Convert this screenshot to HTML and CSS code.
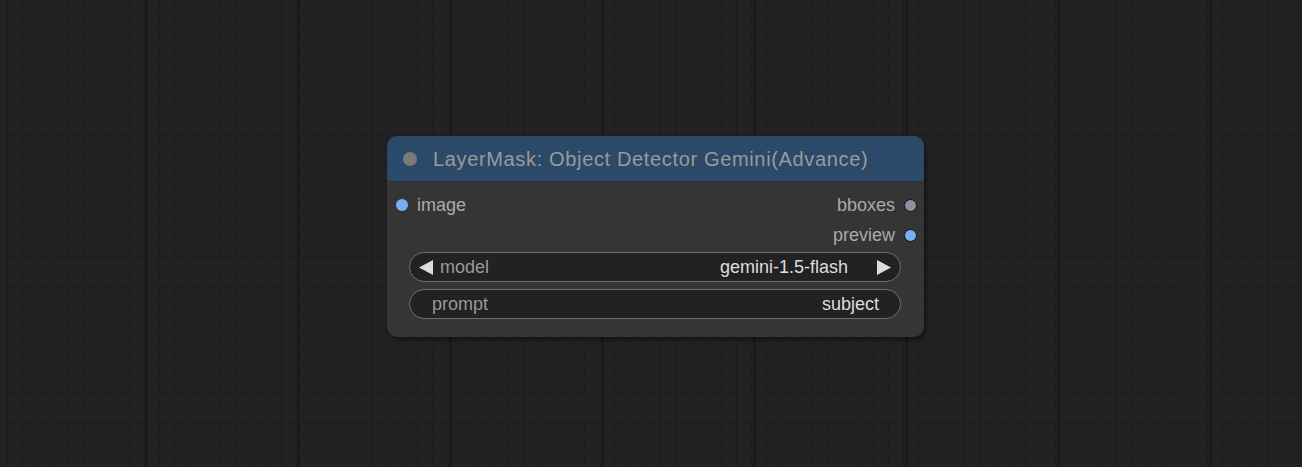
FILE: index.html
```html
<!DOCTYPE html>
<html>
<head>
<meta charset="utf-8">
<link rel="stylesheet" href="styles.css">
</head>
<body>
<div class="canvas">
  <div class="node">
    <div class="node-title">
      <span class="title-dot"></span>
      <span class="title-text">LayerMask: Object Detector Gemini(Advance)</span>
    </div>
    <div class="node-body">
      <div class="slots">
        <div class="slot-row">
          <div class="slot-in"><span class="dot dot-image"></span><span class="slot-label">image</span></div>
          <div class="slot-out"><span class="slot-label">bboxes</span><span class="dot dot-bbox"></span></div>
        </div>
        <div class="slot-row">
          <div class="slot-in"></div>
          <div class="slot-out"><span class="slot-label">preview</span><span class="dot dot-preview"></span></div>
        </div>
      </div>
      <div class="widgets">
        <div class="widget combo">
          <svg class="arrow" width="14" height="15" viewBox="0 0 14 15"><polygon points="14,0 14,15 0,7.5" fill="#dddddd"/></svg>
          <span class="w-label">model</span>
          <span class="w-value">gemini-1.5-flash</span>
          <svg class="arrow" width="14" height="15" viewBox="0 0 14 15"><polygon points="0,0 0,15 14,7.5" fill="#dddddd"/></svg>
        </div>
        <div class="widget text">
          <span class="w-label">prompt</span>
          <span class="w-value">subject</span>
        </div>
      </div>
    </div>
  </div>
</div>
</body>
</html>
```

FILE: styles.css
```css
html, body {
  margin: 0;
  padding: 0;
  width: 1302px;
  height: 467px;
  overflow: hidden;
}
body {
  font-family: "Liberation Sans", Arial, sans-serif;
  background-color: #222222;
}
.canvas {
  position: relative;
  width: 1302px;
  height: 467px;
  background-color: #222222;
  background-image:
    linear-gradient(to right, #1a1a1a 0, #1a1a1a 3px, transparent 3px),
    linear-gradient(to right, #1c1c1c 0, #1c1c1c 1px, transparent 1px),
    linear-gradient(to bottom, #1c1c1c 0, #1c1c1c 1px, transparent 1px);
  background-size: 152px 100%, 15.2px 100%, 100% 15.2px;
  background-position: 145px 0, 7px 0, 0 13px;
}
.node {
  position: absolute;
  left: 387px;
  top: 136px;
  width: 537px;
  height: 201px;
  border-radius: 10px;
  background: #353535;
  box-shadow: 2px 3px 4px rgba(0, 0, 0, 0.45);
  display: flex;
  flex-direction: column;
  overflow: hidden;
}
.node-title {
  height: 46px;
  flex: none;
  background: #2b4a69;
  border-bottom: 1px solid #263340;
  display: flex;
  align-items: center;
  box-sizing: border-box;
  padding-left: 16px;
}
.title-dot {
  width: 14px;
  height: 14px;
  border-radius: 50%;
  background: #7a7a7a;
  flex: none;
}
.title-text {
  margin-left: 16px;
  color: #9a9a9a;
  font-size: 20px;
  letter-spacing: 0.65px;
  white-space: nowrap;
  position: relative;
  top: 1px;
}
.node-body {
  flex: 1;
  display: flex;
  flex-direction: column;
  padding-top: 8px;
}
.slot-row {
  height: 30px;
  display: flex;
  justify-content: space-between;
  align-items: center;
}
.slot-in, .slot-out {
  display: flex;
  align-items: center;
}
.slot-in {
  padding-left: 9px;
}
.slot-out {
  padding-right: 7px;
}
.slot-label {
  color: #aaaaaa;
  font-size: 18px;
}
.slot-in .slot-label {
  margin-left: 9px;
}
.slot-out .slot-label {
  margin-right: 9px;
}
.dot {
  width: 13px;
  height: 13px;
  border-radius: 50%;
  box-sizing: border-box;
  flex: none;
}
.dot-image {
  width: 12px;
  height: 12px;
  background: #78aef5;
}
.dot-preview {
  background: #78aef5;
  border: 1.5px solid #111;
}
.dot-bbox {
  background: #8f8f9f;
  border: 1.5px solid #111;
}
.widgets {
  display: flex;
  flex-direction: column;
  gap: 7px;
  padding: 2px 23px 0 22px;
}
.widget {
  height: 30px;
  box-sizing: border-box;
  border: 1.5px solid #6e6e6e;
  border-radius: 15px;
  background: #222222;
  display: flex;
  align-items: center;
  font-size: 18px;
}
.combo {
  padding: 0 9px 0 9px;
}
.text {
  padding: 0 21px 0 22px;
}
.arrow {
  flex: none;
  display: block;
}
.w-label {
  color: #999999;
}
.combo .w-label {
  margin-left: 7px;
}
.w-value {
  margin-left: auto;
  color: #dddddd;
}
.combo .w-value {
  margin-right: 29px;
}
```
